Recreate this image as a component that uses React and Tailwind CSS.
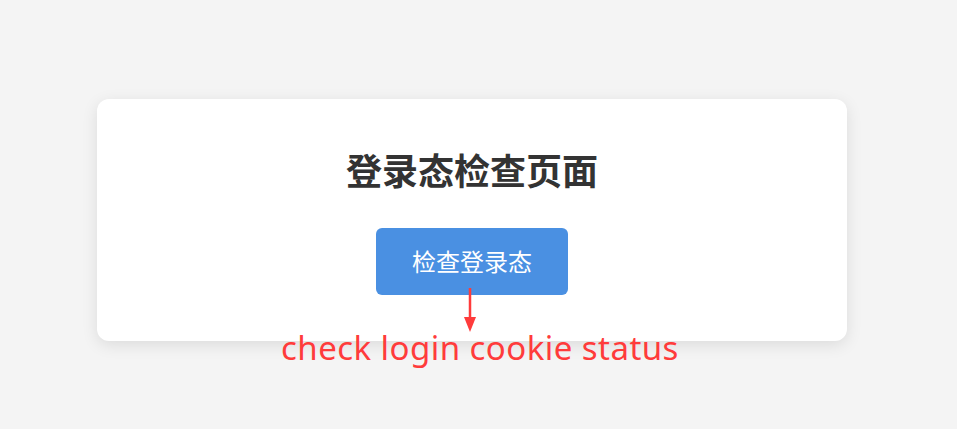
import React from 'react';

export default function App() {
  return (
    <div className="relative min-h-[429px] w-full bg-[#f4f4f4] pt-[99px] font-['Noto_Sans','Noto_Sans_CJK_SC',sans-serif]">
      <div className="ml-[97px] w-[750px] h-[242px] bg-white rounded-xl shadow-[0_4px_16px_rgba(0,0,0,0.1)] flex flex-col items-center pt-[46px]">
        <h1 className="text-[36px] leading-[54px] font-bold text-[#333]">登录态检查页面</h1>
        <button className="mt-[29px] w-[192px] h-[67px] rounded-md bg-[#4a90e2] text-white text-[24px]">
          检查登录态
        </button>
      </div>

      {/* annotation */}
      <svg className="absolute left-[460px] top-[288px]" width="20" height="46" viewBox="0 0 20 46">
        <line x1="10" y1="0" x2="10" y2="32" stroke="#ff3b3b" strokeWidth="2.5" />
        <polygon points="4,29 16,29 10,44" fill="#ff3b3b" />
      </svg>
      <div className="absolute left-[281px] top-[325px] text-[33px] leading-[46px] tracking-[0.45px] text-[#ff3b3b] whitespace-nowrap">
        check login cookie status
      </div>
    </div>
  );
}
